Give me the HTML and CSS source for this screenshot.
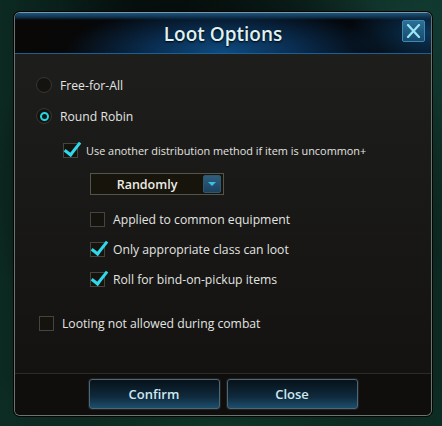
FILE: index.html
```html
<!DOCTYPE html>
<html lang="en">

<head>
  <title>Loot Options</title>
  <meta charset="utf-8">
  <link rel="stylesheet" href="styles.css">
</head>

<body>
  <div class="dialog">
    <div class="header">
      <h1>Loot Options</h1>
      <button class="close-x" type="button" aria-label="Close">
        <svg width="15" height="14" viewBox="0 0 15 14">
          <path d="M2 1 L13 13 M13 1 L2 13" stroke="#9ae6f7" stroke-width="2.2" stroke-linecap="round" />
        </svg>
      </button>
    </div>

    <div class="content">
      <label class="row">
        <span class="radio"></span>
        <span class="text">Free-for-All</span>
      </label>
      <label class="row row-2">
        <span class="radio on"></span>
        <span class="text">Round Robin</span>
      </label>

      <label class="row row-3 indent-1">
        <span class="check on"></span>
        <span class="text small">Use another distribution method if item is uncommon+</span>
      </label>

      <div class="select indent-2">
        <span class="select-value">Randomly</span>
        <span class="select-arrow"></span>
      </div>

      <label class="row row-a indent-2">
        <span class="check"></span>
        <span class="text">Applied to common equipment</span>
      </label>
      <label class="row indent-2">
        <span class="check on"></span>
        <span class="text">Only appropriate class can loot</span>
      </label>
      <label class="row indent-2">
        <span class="check on"></span>
        <span class="text">Roll for bind-on-pickup items</span>
      </label>

      <label class="row row-last indent-0">
        <span class="check"></span>
        <span class="text">Looting not allowed during combat</span>
      </label>
    </div>

    <div class="footer">
      <button class="btn" type="button">Confirm</button>
      <button class="btn" type="button">Close</button>
    </div>
  </div>
</body>

</html>
```

FILE: styles.css
```css
html,
body {
  margin: 0;
  height: 100%;
}

body {
  background:
    radial-gradient(ellipse at 50% 45%, #050807 30%, transparent 75%),
    radial-gradient(circle at 95% 5%, #123a30 0, transparent 40%),
    radial-gradient(ellipse 60% 20% at 50% 100%, #103a2c 0, transparent 100%),
    linear-gradient(90deg, #0c2a22, #06120f 30%, #06120f 70%, #0c2a22);
  font-family: "Open Sans", "Noto Sans", sans-serif;
  color: #e4e8e6;
  padding: 12px 10px 10px 14px;
  box-sizing: border-box;
  overflow: hidden;
}

.dialog {
  width: 418px;
  height: 404px;
  box-sizing: border-box;
  border: 1px solid #6b7473;
  border-top-color: #7c97a8;
  border-radius: 6px;
  display: flex;
  flex-direction: column;
  overflow: hidden;
  background: linear-gradient(#1f1f1d, #121110);
  box-shadow: 0 0 0 1px #050505;
}

/* title bar */
.header {
  position: relative;
  height: 40px;
  flex: none;
  display: flex;
  align-items: center;
  justify-content: center;
  border-bottom: 1px solid #1c5f95;
  background:
    linear-gradient(#1d557d 0, #0f3350 4px, transparent 7px),
    radial-gradient(ellipse 38% 120% at 50% 100%, #0e4b80 0, #0a2e52 45%, transparent 100%),
    radial-gradient(ellipse 20% 100% at 100% 50%, #0b3558 0, transparent 100%),
    linear-gradient(90deg, #0a0806, #03070c 40%, #04070b);
}

.header h1 {
  margin: 2px 0 0;
  font-size: 19px;
  font-weight: 600;
  color: #dff2f2;
  text-shadow: 0 1px 2px #000;
}

.close-x {
  position: absolute;
  top: 7px;
  right: 6px;
  width: 23px;
  height: 22px;
  padding: 0;
  display: flex;
  align-items: center;
  justify-content: center;
  border: 1px solid #3c8ab3;
  border-radius: 2px;
  background: linear-gradient(#2c6f96, #174a6b);
}

/* options */
.content {
  flex: 1;
  padding: 16px 0 0 21px;
}

.row {
  display: flex;
  align-items: center;
  height: 30px;
}

.row-2 {
  margin-top: 1px;
}

.row-3 {
  margin-top: 4px;
}

.row-a {
  margin-top: 9px;
}

.row-last {
  margin-top: 14px;
}

.indent-0 {
  margin-left: 3px;
}

.indent-1 {
  margin-left: 27px;
}

.indent-2 {
  margin-left: 54px;
}

.text {
  font-size: 12.2px;
  margin-left: 8px;
  color: #e2e4e0;
}

.text.small {
  font-size: 10.9px;
  margin-left: 8px;
}

.radio {
  width: 16px;
  height: 16px;
  box-sizing: border-box;
  border-radius: 50%;
  border: 1px solid #36362f;
  background: #15130f;
  display: flex;
  align-items: center;
  justify-content: center;
}

.radio.on::after {
  content: "";
  width: 9px;
  height: 9px;
  box-sizing: border-box;
  border-radius: 50%;
  border: 2.5px solid #22d6e6;
}

.check {
  position: relative;
  width: 15px;
  height: 15px;
  box-sizing: border-box;
  border: 1px solid #45443d;
  background: #15130e;
  flex: none;
}

.check.on::after {
  content: "";
  position: absolute;
  left: 4px;
  top: -5px;
  width: 6px;
  height: 14px;
  border-right: 3px solid #2fd8ea;
  border-bottom: 3px solid #2fd8ea;
  transform: rotate(38deg);
}

/* dropdown */
.select {
  margin-top: 8px;
  width: 134px;
  height: 22px;
  box-sizing: border-box;
  border: 1px solid #56544a;
  background: #17140c;
  display: flex;
  align-items: center;
  padding-right: 2px;
}

.select-value {
  flex: 1;
  text-align: center;
  font-size: 12.5px;
  font-weight: 600;
  color: #ecece6;
}

.select-arrow {
  width: 18px;
  height: 18px;
  box-sizing: border-box;
  border: 1px solid #2d5874;
  border-radius: 2px;
  background: linear-gradient(#2f5e7c, #1c4260);
  display: flex;
  align-items: center;
  justify-content: center;
}

.select-arrow::after {
  content: "";
  border-left: 4px solid transparent;
  border-right: 4px solid transparent;
  border-top: 4px solid #3bbfe8;
}

/* buttons */
.footer {
  height: 42px;
  flex: none;
  border-top: 1px solid #2b2b27;
  background: #0f0e0c;
  display: flex;
  justify-content: center;
  align-items: flex-start;
  gap: 7px;
  padding-top: 5px;
  box-sizing: border-box;
}

.btn {
  width: 131px;
  height: 30px;
  border: 1px solid #4c6877;
  border-radius: 3px;
  box-shadow: 0 0 0 1px #202020;
  background: linear-gradient(#07121a, #0f2a3c 60%, #1d4e6c);
  color: #cfe7f0;
  font-family: "Open Sans", "Noto Sans", sans-serif;
  font-size: 13px;
  font-weight: 600;
}
```
